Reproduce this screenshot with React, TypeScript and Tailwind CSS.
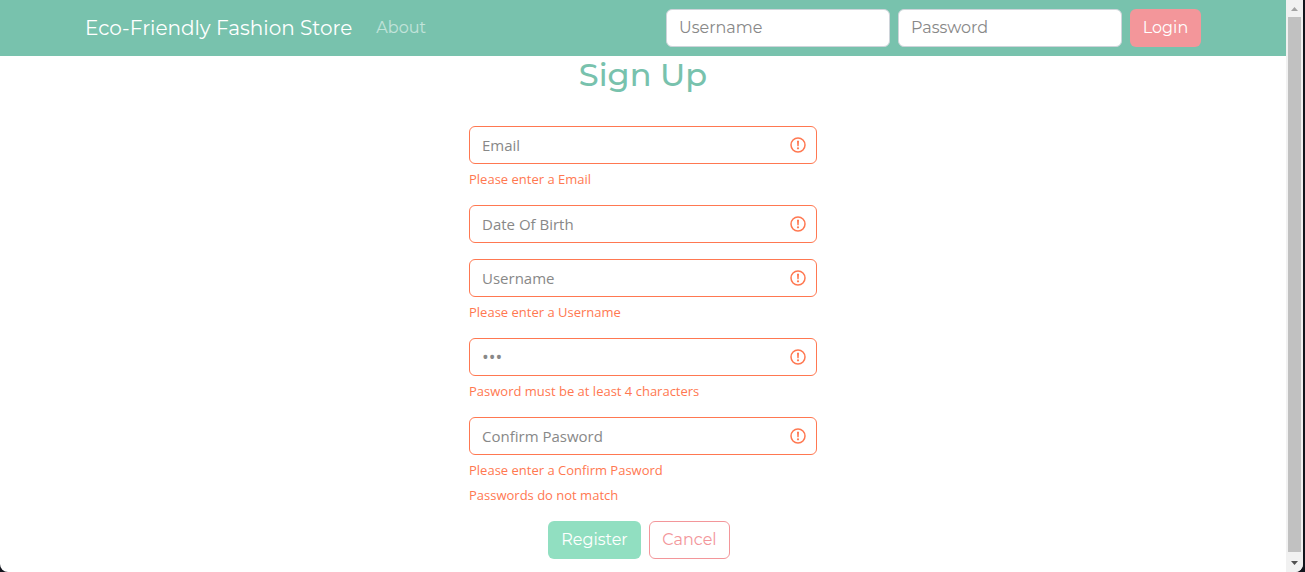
import React from "react";

type Field = {
  id: string;
  label: string;
  type: string;
  value?: string;
  errors: string[];
};

const fields: Field[] = [
  { id: "email", label: "Email", type: "text", errors: ["Please enter a Email"] },
  { id: "birth", label: "Date Of Birth", type: "text", errors: [] },
  { id: "username", label: "Username", type: "text", errors: ["Please enter a Username"] },
  {
    id: "password",
    label: "Pasword",
    type: "password",
    value: "123",
    errors: ["Pasword must be at least 4 characters"],
  },
  {
    id: "confirm",
    label: "Confirm Pasword",
    type: "password",
    errors: ["Please enter a Confirm Pasword", "Passwords do not match"],
  },
];

function ErrorIcon() {
  return (
    <svg
      viewBox="0 0 16 16"
      className="pointer-events-none absolute top-1/2 right-[11px] size-4 -translate-y-1/2"
      fill="none"
      stroke="#ff7851"
      aria-hidden="true"
    >
      <circle cx="8" cy="8" r="7" strokeWidth="1.500" />
      <path d="M7 3.800h2L8.700 9.200H7.300z" fill="#ff7851" stroke="none" />
      <circle cx="8" cy="11.300" r="1.100" fill="#ff7851" stroke="none" />
    </svg>
  );
}

function FormField({ field }: { field: Field }) {
  return (
    <div className="mb-4">
      <div className="relative">
        <input
          id={field.id}
          type={field.type}
          aria-label={field.label}
          aria-invalid="true"
          placeholder={field.label}
          defaultValue={field.value}
          className={
            "block h-[38px] w-full rounded-md border border-[#ff7851] bg-white pr-10 pl-3 text-[#888888] outline-none placeholder:text-[#888888] " +
            (field.value ? "text-[18px]" : "text-[15px]")
          }
        />
        <ErrorIcon />
      </div>
      {field.errors.map((error) => (
        <p key={error} className="pt-[5px] text-[13px] leading-5 text-[#ff7851]">
          {error}
        </p>
      ))}
    </div>
  );
}

function NavInput({ label, type }: { label: string; type: string }) {
  return (
    <input
      type={type}
      aria-label={label}
      placeholder={label}
      className="h-[38px] w-56 min-w-0 rounded-md border border-[#ced4da] bg-white px-3 pb-px outline-none placeholder:text-[#888888]"
    />
  );
}

function ScrollRail() {
  return (
    <div className="flex w-[17px] shrink-0 flex-col items-center bg-[#f1f1f1]" aria-hidden="true">
      <svg viewBox="0 0 17 17" className="size-[17px] shrink-0">
        <path d="M5 11h7L8.500 7z" fill="#a3a3a3" />
      </svg>
      <div className="w-[13px] grow bg-[#c1c1c1]" />
      <svg viewBox="0 0 17 20" className="h-5 w-[17px] shrink-0">
        <path d="M5 9h7L8.500 13z" fill="#505050" />
      </svg>
    </div>
  );
}

export default function App() {
  return (
    <div className="flex min-h-screen bg-[#12141c] pr-0.5 font-['Montserrat','Inter',sans-serif] text-base">
      <div className="flex grow overflow-hidden rounded-b-lg bg-white">
        <div className="min-w-0 grow">
          <nav className="bg-[#78c2ad]">
            <div className="mx-auto flex h-14 max-w-[1140px] items-center px-3">
              <a href="#" className="mr-6 whitespace-nowrap text-xl text-white">
                Eco-Friendly Fashion Store
              </a>
              <a href="#about" className="text-white/55">
                About
              </a>
              <form className="ml-auto flex gap-2" onSubmit={(e) => e.preventDefault()}>
                <NavInput label="Username" type="text" />
                <NavInput label="Password" type="password" />
                <button
                  type="submit"
                  className="h-[38px] w-[71px] rounded-md bg-[#f3969a] text-white"
                >
                  Login
                </button>
              </form>
            </div>
          </nav>
          <main>
            <h1 className="mb-8 text-center text-[32px] leading-[38px] font-medium text-[#78c2ad]">
              Sign Up
            </h1>
            <form
              className="mx-auto max-w-[348px] font-['Segoe_UI','Open_Sans',sans-serif]"
              onSubmit={(e) => e.preventDefault()}
            >
              {fields.map((field) => (
                <FormField key={field.id} field={field} />
              ))}
              <div className="flex justify-center gap-2 pr-2 font-['Montserrat','Inter',sans-serif]">
                <button
                  type="submit"
                  disabled
                  className="h-[38px] w-[93px] rounded-md bg-[#91dfc1] text-white"
                >
                  Register
                </button>
                <button
                  type="button"
                  className="h-[38px] w-[81px] rounded-md border border-[#f3969a] text-[#f3969a]"
                >
                  Cancel
                </button>
              </div>
            </form>
          </main>
        </div>
        <ScrollRail />
      </div>
    </div>
  );
}
